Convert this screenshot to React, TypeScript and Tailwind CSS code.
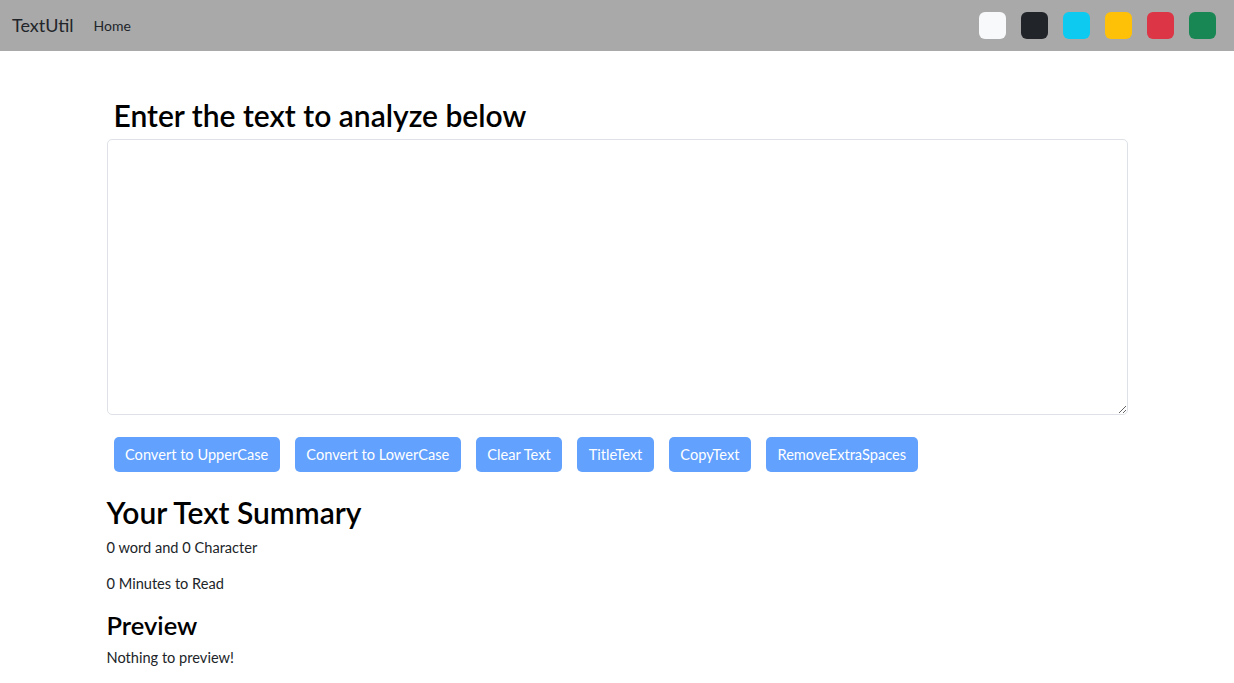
import { useState } from 'react';

const SWATCHES = ['bg-[#f8f9fa]', 'bg-[#212529]', 'bg-[#0dcaf0]', 'bg-[#ffc107]', 'bg-[#dc3545]', 'bg-[#198754]'];
const ACTIONS = ['Convert to UpperCase', 'Convert to LowerCase', 'Clear Text', 'TitleText', 'CopyText', 'RemoveExtraSpaces'];

export default function App() {
  const [text, setText] = useState('');
  const words = text.split(/\s+/).filter((w) => w.length > 0).length;

  return (
    <div className="min-h-screen bg-white font-['Segoe_UI','Lato','Noto_Sans',sans-serif] text-[#212529]">
      <nav className="flex h-[51px] items-center bg-[#a9a9a9] pl-3 pr-[18px]">
        <span className="text-[18px] text-[#212529]">TextUtil</span>
        <span className="ml-[20px] text-[14px] text-[#212529]">Home</span>
        <div className="ml-auto flex gap-[15px]">
          {SWATCHES.map((c) => (
            <span key={c} className={`h-[27px] w-[27px] rounded-[6px] ${c}`} />
          ))}
        </div>
      </nav>

      <main className="mx-auto w-[1021px] pt-[43px]">
        <h1 className="mx-[7px] mb-[3px] text-[30px] font-semibold leading-[42px] text-black">Enter the text to analyze below</h1>
        <textarea
          value={text}
          onChange={(e) => setText(e.target.value)}
          className="block h-[276px] w-full rounded-[5px] border border-[#dee2e6] px-3 py-2 text-[14px] outline-none"
        />
        <div className="mx-[7px] mt-[22px] flex gap-[15px]">
          {ACTIONS.map((a) => (
            <button key={a} disabled className="h-[35px] rounded-[5px] bg-[#62a1fe] px-[11.5px] text-[14.6px] text-white">
              {a}
            </button>
          ))}
        </div>

        <h2 className="mt-[20px] text-[30px] font-semibold leading-[40px] text-black">Your Text Summary</h2>
        <p className="mt-[5px] text-[14.6px] leading-[22px]">{words} word and {text.length} Character</p>
        <p className="mt-[14px] text-[14.6px] leading-[22px]">{0.008 * words} Minutes to Read</p>
        <h3 className="mt-[14px] text-[25.5px] font-semibold leading-[32px] text-black">Preview</h3>
        <p className="mt-[6px] text-[14.6px] leading-[22px]">{text.length > 0 ? text : 'Nothing to preview!'}</p>
      </main>
    </div>
  );
}
